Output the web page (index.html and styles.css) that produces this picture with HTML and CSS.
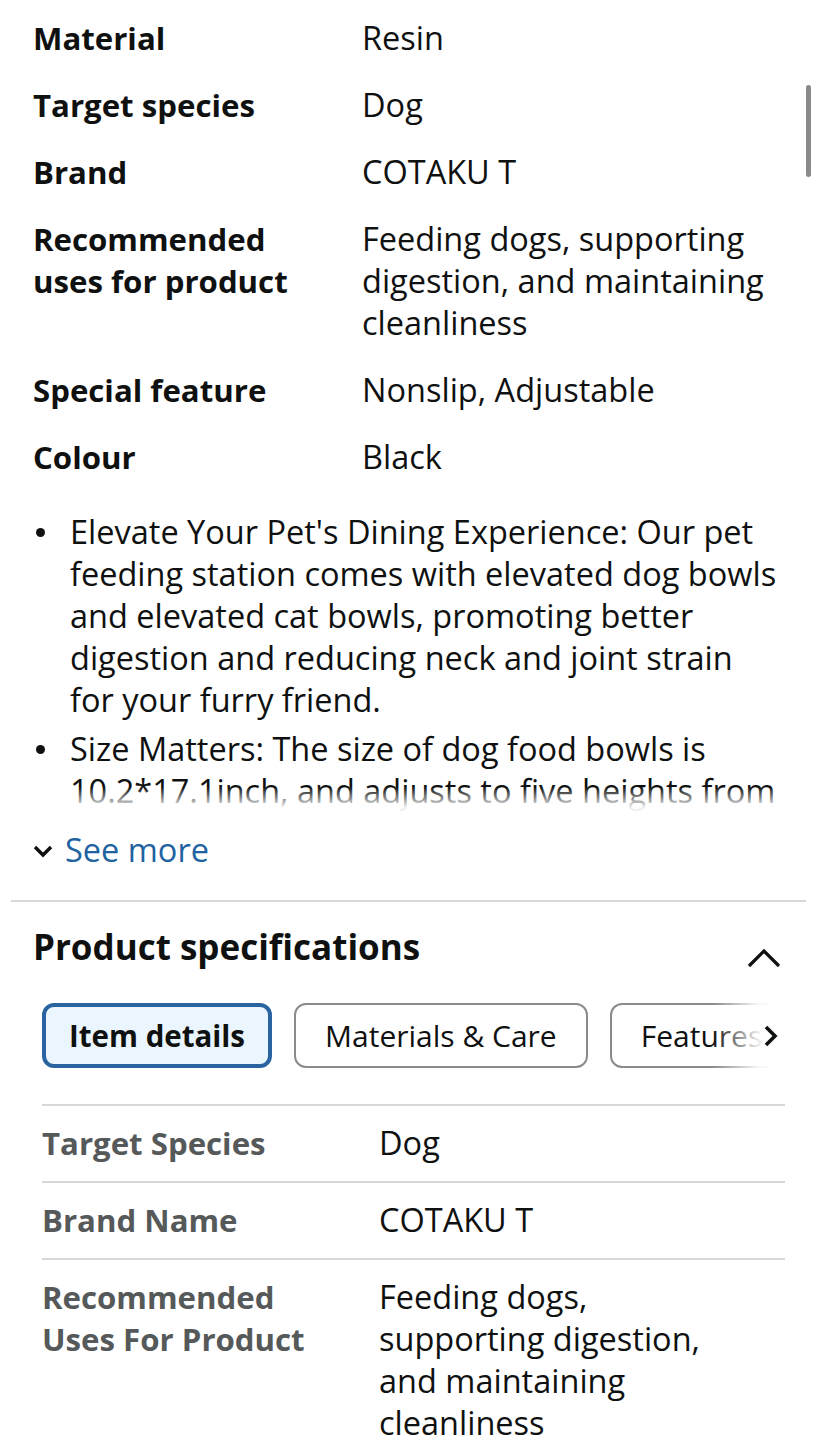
FILE: index.html
```html
<!DOCTYPE html>
<html lang="en">
<head>
<meta charset="utf-8">
<title>Product details</title>
<link rel="stylesheet" href="styles.css">
</head>
<body>
<div class="page">
  <section class="overview">
    <div class="ov-row"><div class="ov-label">Material</div><div class="ov-value">Resin</div></div>
    <div class="ov-row"><div class="ov-label">Target species</div><div class="ov-value">Dog</div></div>
    <div class="ov-row"><div class="ov-label">Brand</div><div class="ov-value">COTAKU T</div></div>
    <div class="ov-row"><div class="ov-label">Recommended uses for product</div><div class="ov-value">Feeding dogs, supporting digestion, and maintaining cleanliness</div></div>
    <div class="ov-row"><div class="ov-label">Special feature</div><div class="ov-value">Nonslip, Adjustable</div></div>
    <div class="ov-row"><div class="ov-label">Colour</div><div class="ov-value">Black</div></div>
  </section>

  <section class="features">
    <ul class="bullets">
      <li>Elevate Your Pet's Dining Experience: Our pet feeding station comes with elevated dog bowls and elevated cat bowls, promoting better digestion and reducing neck and joint strain for your furry friend.</li>
      <li>Size Matters: The size of dog food bowls is 10.2*17.1inch, and adjusts to five heights from 7.15 to 10.2 inches, suitable for large, medium and small dogs and cats.</li>
      <li>Easy to Clean: The bowls are made of stainless steel and can be removed for washing.</li>
    </ul>
    <div class="fade"></div>
    <a class="see-more" href="#">
      <svg class="chev-down" width="20" height="14" viewBox="0 0 20 14"><path d="M2 3 L10 11 L18 3" fill="none" stroke="#0f1111" stroke-width="3.4"/></svg>
      <span>See more</span>
    </a>
  </section>

  <div class="divider"></div>

  <section class="specs">
    <div class="specs-head">
      <h2>Product specifications</h2>
      <svg class="chev-up" width="34" height="22" viewBox="0 0 34 22"><path d="M2 19 L17 4 L32 19" fill="none" stroke="#0f1111" stroke-width="3.2"/></svg>
    </div>

    <div class="tabs-wrap">
      <div class="tabs">
        <button class="tab tab-active">Item details</button>
        <button class="tab">Materials &amp; Care</button>
        <button class="tab">Features &amp; Specs</button>
        <button class="tab">Measurements</button>
      </div>
      <div class="tabs-fade">
        <svg class="chev-right" width="16" height="22" viewBox="0 0 16 22"><path d="M3 2 L12 11 L3 20" fill="none" stroke="#0f1111" stroke-width="3.6"/></svg>
      </div>
    </div>

    <div class="spec-table">
      <div class="spec-row"><div class="spec-label">Target Species</div><div class="spec-value">Dog</div></div>
      <div class="spec-row"><div class="spec-label">Brand Name</div><div class="spec-value">COTAKU T</div></div>
      <div class="spec-row"><div class="spec-label">Recommended Uses For Product</div><div class="spec-value">Feeding dogs, supporting digestion, and maintaining cleanliness</div></div>
    </div>
  </section>

  <div class="scrollbar"></div>
</div>
</body>
</html>
```
FILE: styles.css
```css
* { box-sizing: border-box; }
html, body { margin: 0; padding: 0; background: #fff; }
body {
  font-family: "Open Sans", "Noto Sans", "Liberation Sans", sans-serif;
  color: #0f1111;
  font-size: 32.5px;
  line-height: 42px;
}
.page { position: relative; width: 817px; overflow: hidden; }

/* Overview list */
.overview {
  padding: 17px 32px 0 33px;
  display: flex;
  flex-direction: column;
  gap: 25px;
}
.ov-row {
  display: grid;
  grid-template-columns: 329px 1fr;
}
.ov-label { font-weight: 700; font-size: 31.2px; padding-right: 39px; }
.ov-value { font-weight: 400; }

/* Feature bullets */
.features {
  position: relative;
  margin-top: 33px;
  height: 380px;
  overflow: hidden;
}
.bullets {
  margin: 0;
  padding: 0 0 0 70px;
  width: 784px;
  list-style: none;
}
.bullets li { position: relative; }
.bullets li + li { margin-top: 7px; }
.bullets li::before {
  content: "";
  position: absolute;
  left: -34px;
  top: 17px;
  width: 9px;
  height: 9px;
  border-radius: 50%;
  background: #0f1111;
}
.fade {
  position: absolute;
  left: 0; right: 0;
  top: 276px; bottom: 0;
  background: linear-gradient(to bottom, rgba(255,255,255,0) 0px, rgba(255,255,255,0.92) 20px, #fff 32px);
}
.see-more {
  position: absolute;
  left: 33px;
  top: 318px;
  display: flex;
  align-items: center;
  gap: 12px;
  color: #2162a1;
  text-decoration: none;
  height: 42px;
}
.chev-down { display: block; margin-top: 2px; }

.divider {
  margin: 9px 11px 0;
  height: 2px;
  background: #d5d9d9;
}

/* Specifications */
.specs-head {
  margin-top: 24px;
  padding: 0 36px 0 33px;
  display: flex;
  justify-content: space-between;
  align-items: flex-end;
}
.specs-head h2 {
  margin: 0;
  font-size: 35px;
  line-height: 42px;
  font-weight: 700;
}
.chev-up { display: block; margin-bottom: -1px; }

.tabs-wrap {
  position: relative;
  margin: 35px 32px 0 42px;
  overflow: hidden;
}
.tabs {
  display: flex;
  gap: 22px;
}
.tab {
  flex-shrink: 0;
  height: 65px;
  padding: 0 29px;
  border: 2px solid #888c8c;
  border-radius: 12px;
  background: #fff;
  font-family: inherit;
  font-size: 30px;
  color: #0f1111;
  white-space: nowrap;
}
.tab-active {
  border: 4px solid #2a64a0;
  background: #ebf5fe;
  font-weight: 700;
  font-size: 29.5px;
  padding: 0 23px;
}
.tabs-fade {
  position: absolute;
  top: 0; right: 0;
  width: 72px;
  height: 65px;
  background: linear-gradient(to right, rgba(255,255,255,0) 0px, rgba(255,255,255,0.9) 44px, #fff 60px);
  display: flex;
  align-items: center;
  justify-content: flex-end;
  padding-right: 6px;
}
.chev-right { display: block; }

.spec-table {
  margin: 36px 32px 0 42px;
}
.spec-row {
  display: grid;
  grid-template-columns: 337px 350px;
  border-top: 2px solid #d5d9d9;
  padding: 16px 0 17px;
}
.spec-label { font-weight: 700; font-size: 31.2px; color: #565959; padding-right: 37px; }
.spec-value { color: #0f1111; }

.scrollbar {
  position: absolute;
  left: 806px;
  top: 85px;
  width: 5px;
  height: 92px;
  border-radius: 3px;
  background: #8a8a8a;
}
```
